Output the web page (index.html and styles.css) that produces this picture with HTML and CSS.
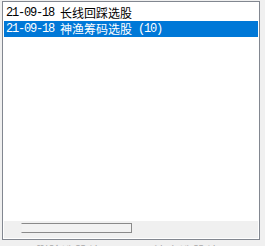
FILE: index.html
```html
<!DOCTYPE html>
<html>
<head>
<meta charset="utf-8">
<link rel="stylesheet" href="styles.css">
</head>
<body>
<div class="page">
  <div class="listbox">
    <div class="rows">
      <div class="row"><span class="num">21-09-18 </span><span class="cjk">长线回踩选股</span></div>
      <div class="row selected"><span class="num">21-09-18 </span><span class="cjk">神渔筹码选股</span><span class="num"> (10)</span></div>
    </div>
    <div class="hscroll">
      <div class="thumb"></div>
    </div>
  </div>
  <div class="footer">
    <span class="flabel">删除选股结果</span>
    <span class="flabel">清空选股结果</span>
  </div>
</div>
</body>
</html>
```

FILE: styles.css
```css
html, body {
  margin: 0;
  padding: 0;
  background: #f0f0f0;
  width: 265px;
  height: 246px;
  overflow: hidden;
}
.page {
  padding: 1px 0 0 2px;
  display: flex;
  flex-direction: column;
}
.listbox {
  width: 256px;
  height: 237px;
  border: 1px solid #828790;
  background: #ffffff;
  display: flex;
  flex-direction: column;
}
.rows {
  flex: 1;
  padding: 3px 1px 0 1px;
}
.row {
  height: 16px;
  line-height: 16px;
  padding-left: 2px;
  color: #000;
  white-space: nowrap;
  display: flex;
  align-items: center;
}
.row.selected {
  background: #0078d7;
  color: #fff;
}
.num {
  font-family: "Liberation Mono", monospace;
  font-size: 12px;
  letter-spacing: -1.2px;
  white-space: pre;
}
.cjk {
  font-family: "Noto Sans CJK SC", sans-serif;
  font-size: 12px;
  line-height: 16px;
}
.hscroll {
  height: 17px;
  margin: 0 1px 1px 1px;
  background: #f0f0f0;
  position: relative;
}
.thumb {
  position: absolute;
  left: 17px;
  top: 2px;
  width: 109px;
  height: 8px;
  border: 1px solid #8a8a8a;
  border-left-color: #f0f0f0;
  background: #f2f2f2;
}
.footer {
  display: flex;
  gap: 40px;
  padding: 4px 0 0 34px;
}
.flabel {
  font-family: "Noto Sans CJK SC", sans-serif;
  font-size: 12px;
  line-height: 14px;
  color: #a8a8a8;
  letter-spacing: 1px;
}
```
